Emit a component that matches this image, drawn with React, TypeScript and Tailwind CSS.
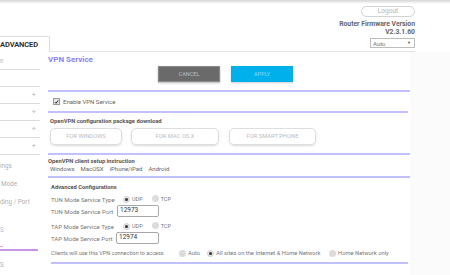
import React from "react";

function Radio({ on }: { on?: boolean }) {
  return on ? (
    <span className="inline-flex w-[7px] h-[7px] rounded-full bg-[#e6e6e6] border border-[#cfcfcf] items-center justify-center">
      <span className="w-[3px] h-[3px] rounded-full bg-[#333]" />
    </span>
  ) : (
    <span className="inline-block w-[7px] h-[7px] rounded-full bg-[#dcdcdc]" />
  );
}

function Line({ w = "w-full", ml = "" }: { w?: string; ml?: string }) {
  return <div className={`h-[2px] bg-[#c3c0ff] ${w} ${ml}`} />;
}

export default function App() {
  return (
    <div className="w-[450px] h-[275px] overflow-hidden bg-white font-['Roboto',sans-serif] text-[#777]">
      <div className="h-[4px] bg-gradient-to-b from-[#d6d6d6] to-white" />
      {/* header */}
      <div className="flex w-[415px] h-[48px] border-b border-[#e2e2e2] justify-between">
        <div className="self-end mb-[-1px] h-[16px] w-[50px] bg-white border-t border-r border-[#dcdcdc] rounded-tr-[2px] flex items-center text-[7.5px] font-bold text-[#333] tracking-[-0.1px]">
          ADVANCED
        </div>
        <div className="flex flex-col items-end pt-[2px]">
          <div className="w-[54px] h-[11px] rounded-full border border-[#d2d2d2] text-[6.5px] text-[#b5b5b5] flex items-center justify-center">
            Logout
          </div>
          <div className="text-[6.8px] font-bold leading-[8px] mt-[3px] text-[#666]">Router Firmware Version</div>
          <div className="text-[6.8px] font-bold leading-[8px] text-[#666]">V2.3.1.60</div>
          <div className="mt-[2px] w-[45px] h-[10px] border border-[#bdbdbd] flex items-center justify-between pl-[2px] pr-[3px] text-[6px] text-[#777]">
            <span>Auto</span>
            <span className="text-[4px] text-[#555]">▼</span>
          </div>
        </div>
      </div>
      {/* body */}
      <div className="flex">
        {/* sidebar */}
        <div className="w-[40px] flex flex-col text-[6.3px] text-[#b0b0b0] leading-[8px]">
          <div className="h-[18px] border-b border-[#dcdcdc] flex items-center text-[#c0c0c0]">e</div>
          <div className="h-[17px] border-b border-[#dcdcdc]" />
          {[0, 1, 2, 3].map((i) => (
            <div key={i} className="h-[17px] border-b border-[#dcdcdc] flex items-center justify-end pr-[4px] text-[8px] text-[#bbb]">
              +
            </div>
          ))}
          <div className="mt-[7px] h-[8px] whitespace-nowrap">ings</div>
          <div className="mt-[10px] h-[8px] whitespace-nowrap pl-[1px]">Mode</div>
          <div className="mt-[10px] h-[8px] whitespace-nowrap">ding / Port</div>
          <div className="mt-[20px] h-[8px] whitespace-nowrap text-[#b8b8e0]">S</div>
          <div className="mt-[12px] w-[3px] h-[1px] bg-[#f0a0d0]" />
          <div className="mt-[2px] h-[1.5px] w-[38px] bg-[#c994e6]" />
          <div className="mt-[10px] h-[8px] whitespace-nowrap">S</div>
        </div>
        {/* main */}
        <div className="w-[362px] ml-[8px] flex flex-col">
          <div className="h-[14px] pt-[3px] leading-[10px] text-[8px] font-bold text-[#8a82f5]">VPN Service</div>
          <div className="h-[16px] flex">
            <div className="ml-[110px] w-[62px] h-[16px] bg-[#6a6a6a] border border-[#8a8a8a] shadow-[0_1px_2px_rgba(0,0,0,0.3)] flex items-center justify-center text-[5.5px] text-[#bdbdbd]">
              CANCEL
            </div>
            <div className="ml-[11px] w-[62px] h-[16px] bg-[#00b0ea] flex items-center justify-center text-[5.5px] text-[#8fd9f5] shadow-[0_1px_2px_rgba(0,0,0,0.2)]">
              APPLY
            </div>
          </div>
          <div className="mt-[8px]">
            <Line />
          </div>
          <div className="h-[19px] flex items-center pl-[5px] gap-[3px]">
            <span className="w-[7px] h-[7px] bg-[#e4e4e4] border border-[#9a9a9a] flex items-center justify-center">
              <svg width="6" height="6" viewBox="0 0 6 6">
                <path d="M1 3.2 L2.4 4.6 L5 1.2" stroke="#222" strokeWidth="1.2" fill="none" />
              </svg>
            </span>
            <span className="text-[6px] text-[#666]">Enable VPN Service</span>
          </div>
          <Line w="w-[360px]" />
          <div className="pt-[4px] pl-[2px] h-[12px] leading-[8px] text-[5.8px] font-bold text-[#555]">
            OpenVPN configuration package download
          </div>
          <div className="mt-[3px] h-[17px] flex pl-[2px]">
            <div className="w-[72px] h-[17px] rounded-[5px] border border-[#dedede] shadow-[0_1px_2px_rgba(0,0,0,0.15)] flex items-center justify-center text-[5.8px] text-[#bdbdbd]">
              FOR WINDOWS
            </div>
            <div className="ml-[9px] w-[88px] h-[17px] rounded-[5px] border border-[#dedede] shadow-[0_1px_2px_rgba(0,0,0,0.15)] flex items-center justify-center text-[5.8px] text-[#bdbdbd]">
              FOR MAC OS X
            </div>
            <div className="ml-[10px] w-[87px] h-[17px] rounded-[5px] border border-[#dedede] shadow-[0_1px_2px_rgba(0,0,0,0.15)] flex items-center justify-center text-[5.8px] text-[#bdbdbd]">
              FOR SMART PHONE
            </div>
          </div>
          <div className="mt-[8px]">
            <Line />
          </div>
          <div className="pt-[2px] h-[10px] leading-[8px] text-[5.8px] font-bold text-[#555]">
            OpenVPN client setup instruction
          </div>
          <div className="h-[9px] leading-[8px] pl-[2px] flex gap-[6px] text-[6px] text-[#666]">
            <span>Windows</span>
            <span>MacOSX</span>
            <span>iPhone/iPad</span>
            <span>Android</span>
          </div>
          <div className="mt-[2px]">
            <Line />
          </div>
          <div className="pl-[3px] flex flex-col text-[6px] text-[#777]">
            <div className="pt-[5px] h-[13px] leading-[8px] text-[5.8px] font-bold text-[#555]">Advanced Configurations</div>
            <div className="mt-[2px] h-[12px] flex items-center">
              <span className="w-[72px]">TUN Mode Service Type</span>
              <Radio on />
              <span className="ml-[2px] text-[5.5px]">UDP</span>
              <span className="ml-[9px]">
                <Radio />
              </span>
              <span className="ml-[2px] text-[5.5px]">TCP</span>
            </div>
            <div className="h-[12px] flex items-center">
              <span className="w-[66px]">TUN Mode Service Port</span>
              <span className="w-[42px] h-[12px] border border-[#a8a8a8] rounded-[2px] flex items-center pl-[2px] text-[6.5px] text-[#333]">
                12973
              </span>
            </div>
            <div className="mt-[3px] h-[12px] flex items-center">
              <span className="w-[72px]">TAP Mode Service Type</span>
              <Radio on />
              <span className="ml-[2px] text-[5.5px]">UDP</span>
              <span className="ml-[9px]">
                <Radio />
              </span>
              <span className="ml-[2px] text-[5.5px]">TCP</span>
            </div>
            <div className="h-[12px] flex items-center">
              <span className="w-[65px]">TAP Mode Service Port</span>
              <span className="w-[43px] h-[12px] border border-[#a8a8a8] rounded-[2px] flex items-center pl-[2px] text-[6.5px] text-[#333]">
                12974
              </span>
            </div>
            <div className="mt-[3px] h-[12px] flex items-center whitespace-nowrap text-[5.8px]">
              <span className="w-[128px] text-[5.5px]">Clients will use this VPN connection to access</span>
              <Radio />
              <span className="ml-[2px] w-[19px]">Auto</span>
              <Radio on />
              <span className="ml-[2px] w-[113px]">All sites on the Internet &amp; Home Network</span>
              <Radio />
              <span className="ml-[2px]">Home Network only</span>
            </div>
            <div className="mt-[3px]">
              <Line w="w-[357px]" />
            </div>
          </div>
        </div>
        <div className="flex-1 bg-[#fbfbfb] h-[223px]" />
      </div>
    </div>
  );
}
